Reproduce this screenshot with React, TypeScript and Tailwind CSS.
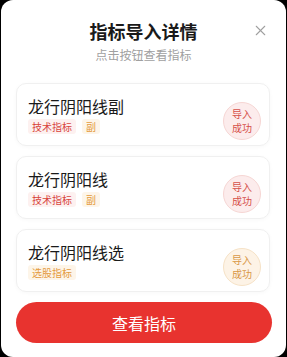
import { X } from 'lucide-react';

type Tag = { label: string; tone: 'red' | 'orange' };
type Item = { name: string; tags: Tag[]; tone: 'red' | 'orange' };

const items: Item[] = [
    { name: '龙行阴阳线副', tags: [{ label: '技术指标', tone: 'red' }, { label: '副', tone: 'orange' }], tone: 'red' },
    { name: '龙行阴阳线', tags: [{ label: '技术指标', tone: 'red' }, { label: '副', tone: 'orange' }], tone: 'red' },
    { name: '龙行阴阳线选', tags: [{ label: '选股指标', tone: 'orange' }], tone: 'orange' },
];

const tagTone = {
    red: 'bg-[#fdf1f0] text-[#d8453d]',
    orange: 'bg-[#fdf5e9] text-[#e49a3c]',
};

const badgeTone = {
    red: 'bg-[#fcecec] border-[#f6d6d4] text-[#d6504a]',
    orange: 'bg-[#fdf3e6] border-[#f6e2c6] text-[#d99846]',
};

export default function App() {
    return (
        <div className="h-[357px] w-[287px] bg-black pl-[1px] font-['Noto_Sans_CJK_SC',sans-serif]">
            <div className="relative h-[357px] w-[285px] rounded-[12px] bg-white">
                {/* ── Header ── */}
                <button className="absolute right-[17px] top-[22px] text-[#a0a0a0]">
                    <X size={17} strokeWidth={1.5} />
                </button>
                <div className="flex flex-col items-center pt-[19px]">
                    <h2 className="text-[18px] font-bold leading-[24px] text-[#1a1a1a]">指标导入详情</h2>
                    <p className="mt-[4px] text-[12px] leading-[16px] text-[#a0a0a0]">点击按钮查看指标</p>
                </div>

                {/* ── List ── */}
                <div className="mt-[20px] flex flex-col gap-[10px] pl-[15px] pr-[16px]">
                    {items.map((item) => (
                        <div
                            key={item.name}
                            className="flex h-[63px] items-center justify-between rounded-[10px] border border-[#f0f0f0] pl-[11px] pr-[8px] shadow-[0_1px_4px_rgba(0,0,0,0.03)]"
                        >
                            <div className="flex flex-col">
                                <div className="text-[16px] leading-[22px] text-[#1a1a1a]">{item.name}</div>
                                <div className="mt-[2px] flex gap-[6px]">
                                    {item.tags.map((t) => (
                                        <span
                                            key={t.label}
                                            className={`rounded-[3px] px-[4px] text-[10px] leading-[15px] ${tagTone[t.tone]}`}
                                        >
                                            {t.label}
                                        </span>
                                    ))}
                                </div>
                            </div>
                            <div
                                className={`mt-[12px] flex h-[38px] w-[38px] flex-col items-center justify-center rounded-full border text-[10px] leading-[14px] ${badgeTone[item.tone]}`}
                            >
                                <span>导入</span>
                                <span>成功</span>
                            </div>
                        </div>
                    ))}
                </div>

                {/* ── Action ── */}
                <div className="mt-[10px] pl-[15px] pr-[14px]">
                    <button className="h-[41px] w-full rounded-full bg-[#e8332f] text-[16px] text-white">
                        查看指标
                    </button>
                </div>
            </div>
        </div>
    );
}
